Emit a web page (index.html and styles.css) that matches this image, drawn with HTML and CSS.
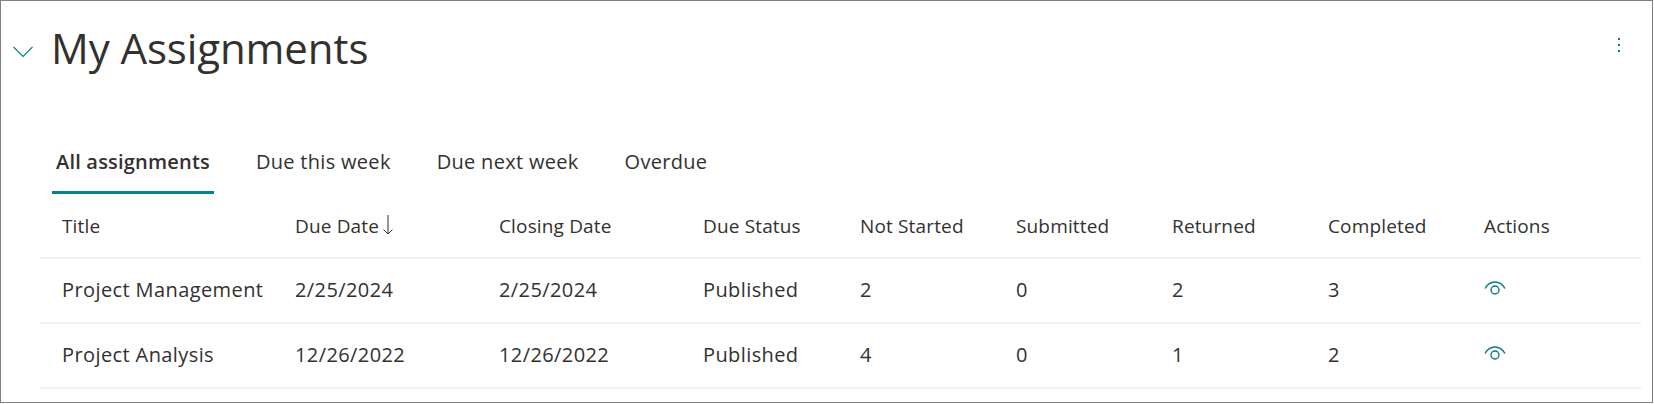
FILE: index.html
```html
<!DOCTYPE html>
<html lang="en">
<head>
    <meta charset="UTF-8">
    <meta name="viewport" content="width=device-width, initial-scale=1.0">
    <title>My Assignments</title>
    <link rel="stylesheet" href="styles.css">
</head>
<body>
    <section class="panel">
        <header class="panel-head">
            <svg class="chevron" width="20" height="12" viewBox="0 0 20 12"><path d="M.5 1 10 10.5 19.5 1" fill="none" stroke="#038387" stroke-width="1.1"/></svg>
            <h1 class="panel-title">My Assignments</h1>
            <div class="more"><span></span><span></span><span></span></div>
        </header>

        <nav class="tabs">
            <a class="tab tab-active">All assignments</a>
            <a class="tab">Due this week</a>
            <a class="tab">Due next week</a>
            <a class="tab">Overdue</a>
        </nav>

        <div class="table">
            <div class="row row-head">
                <div>Title</div>
                <div class="sorted">Due Date<svg width="10" height="20" viewBox="0 0 10 20"><path d="M5 0v19M.6 14.600 5 19l4.400-4.400" fill="none" stroke="#323130"/></svg></div>
                <div>Closing Date</div>
                <div>Due Status</div>
                <div>Not Started</div>
                <div>Submitted</div>
                <div>Returned</div>
                <div>Completed</div>
                <div>Actions</div>
            </div>
            <div class="row">
                <div>Project Management</div>
                <div>2/25/2024</div>
                <div>2/25/2024</div>
                <div>Published</div>
                <div>2</div>
                <div>0</div>
                <div>2</div>
                <div>3</div>
                <div><svg class="eye" width="22" height="14" viewBox="0 0 22 14"><path d="M1 7.500C3.500 3 7 1 11 1s7.500 2 10 6.500" fill="none" stroke="#0b7a80" stroke-width="1.400"/><circle cx="11" cy="9" r="4" fill="none" stroke="#0b7a80" stroke-width="1.400"/></svg></div>
            </div>
            <div class="row">
                <div>Project Analysis</div>
                <div>12/26/2022</div>
                <div>12/26/2022</div>
                <div>Published</div>
                <div>4</div>
                <div>0</div>
                <div>1</div>
                <div>2</div>
                <div><svg class="eye" width="22" height="14" viewBox="0 0 22 14"><path d="M1 7.500C3.500 3 7 1 11 1s7.500 2 10 6.500" fill="none" stroke="#0b7a80" stroke-width="1.400"/><circle cx="11" cy="9" r="4" fill="none" stroke="#0b7a80" stroke-width="1.400"/></svg></div>
            </div>
        </div>
    </section>
</body>
</html>
```

FILE: styles.css
```css
html, body {
    margin: 0;
    height: 100%;
    background-color: #ffffff;
}
body {
    font-family: 'Open Sans', 'Noto Sans', sans-serif;
    color: #323130;
    overflow: hidden;
}
.panel {
    box-sizing: border-box;
    width: 1653px;
    height: 403px;
    border: 1px solid #808080;
    padding: 0 11px 0 39px;
}

/* heading */
.panel-head {
    display: flex;
    align-items: center;
    height: 96px;
    margin-left: -27px;
}
.chevron {
    margin-right: 18px;
    margin-top: 5px;
}
.panel-title {
    margin: 0;
    font-size: 42px;
    font-weight: 400;
    letter-spacing: -0.1px;
    line-height: 93px;
    flex: 1;
    align-self: flex-start;
}
.more {
    display: flex;
    flex-direction: column;
    gap: 4px;
    margin-right: 21px;
    margin-top: -8px;
}
.more span {
    width: 2px;
    height: 2px;
    background-color: #038387;
}

/* tabs */
.tabs {
    display: flex;
    margin-left: 12px;
    margin-top: 34px;
    height: 63px;
}
.tab {
    box-sizing: border-box;
    height: 63px;
    line-height: 62px;
    padding: 0 4px;
    margin-right: 38px;
    font-size: 20px;
    letter-spacing: 0.3px;
    white-space: nowrap;
}
.tab-active {
    font-weight: 600;
    letter-spacing: 0.2px;
    border-bottom: 3px solid #038387;
}

/* table */
.row {
    display: grid;
    grid-template-columns: 233px 204px 204px 157px 156px 156px 156px 156px 1fr;
    height: 63px;
    border-bottom: 2px solid #f3f2f1;
    align-items: center;
    font-size: 20px;
    letter-spacing: 0.4px;
}
.row > div {
    padding-left: 22px;
    padding-bottom: 2px;
    white-space: nowrap;
}
.row-head {
    font-size: 19px;
    letter-spacing: 0.15px;
}
.row-head > div {
    padding-bottom: 0;
}
.sorted svg {
    margin-left: 4px;
    vertical-align: -2px;
}
.eye {
    display: block;
    margin-bottom: 3px;
}
```
